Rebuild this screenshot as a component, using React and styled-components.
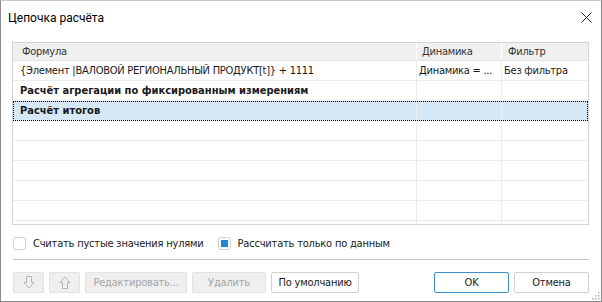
import React from "react";
import styled, { createGlobalStyle, css } from "styled-components";

const UI_FONT = `"DejaVu Sans Condensed", "DejaVu Sans", Tahoma, sans-serif`;

const Global = createGlobalStyle`
  html, body { margin: 0; padding: 0; background: #ffffff; }
  body { font-family: ${UI_FONT}; }
  * { box-sizing: border-box; }
`;

const Window = styled.div`
  width: 602px;
  height: 302px;
  background: #ffffff;
  border: 1px solid #8a8a8a;
  border-top-color: #c8c8c8;
  display: flex;
  flex-direction: column;
  position: relative;
  overflow: hidden;
  font-family: ${UI_FONT};
  font-size: 11px;
  letter-spacing: -0.2px;
  color: #1a1a1a;
`;

const TitleBar = styled.div`
  height: 32px;
  display: flex;
  align-items: center;
  justify-content: space-between;
  padding: 0 9px 0 7px;
  flex: none;
`;

const Title = styled.div`
  font-family: Roboto, "Noto Sans", sans-serif;
  font-size: 12px;
  letter-spacing: 0;
  color: #000;
  padding-top: 1px;
`;

const CloseBtn = styled.div`
  width: 12px;
  height: 12px;
  display: flex;
  align-items: center;
  justify-content: center;
`;

const Body = styled.div`
  flex: 1;
  display: flex;
  flex-direction: column;
  padding: 9px 12px 0 11px;
`;

const Grid = styled.div`
  height: 183px;
  border: 1px solid #d4d4d4;
  overflow: hidden;
  flex: none;
`;

const Row = styled.div`
  display: grid;
  grid-template-columns: 404px 85px 85px;
  height: ${(p) => (p.$header ? 18 : 20)}px;
  border-bottom: 1px solid ${(p) => (p.$header ? "#e4e4e4" : "#ececec")};
  background: ${(p) => (p.$header ? "#f0f0f0" : p.$selected ? "#d6e8f6" : "#ffffff")};
  ${(p) =>
    p.$selected &&
    css`
      outline: 1px dotted #000;
      outline-offset: -1px;
    `}
`;

const Cell = styled.div`
  display: flex;
  align-items: center;
  padding-left: ${(p) => p.$pad}px;
  white-space: nowrap;
  overflow: hidden;
  font-weight: ${(p) => (p.$bold ? 700 : 400)};
  letter-spacing: ${(p) => (p.$bold ? "0px" : "-0.25px")};
  color: ${(p) => (p.$header ? "#333" : "#1a1a1a")};
  border-right: 1px solid ${(p) => (p.$header ? "#ffffff" : "#ececec")};
  &:last-child { border-right: none; }
`;

const Options = styled.div`
  height: 34px;
  display: flex;
  align-items: center;
  gap: 14px;
  padding: 3px 0 0 1px;
  flex: none;
`;

const CheckLabel = styled.label`
  display: flex;
  align-items: center;
  gap: 7px;
  color: #1a1a1a;
`;

const Box = styled.span`
  width: 13px;
  height: 13px;
  border: 1px solid #cfcfcf;
  border-radius: 3px;
  background: #fff;
  display: flex;
  align-items: center;
  justify-content: center;
  &::after {
    content: "";
    display: ${(p) => (p.$checked ? "block" : "none")};
    width: 7px;
    height: 7px;
    background: #1f87d6;
  }
`;

const Separator = styled.div`
  height: 1px;
  background: #c8c8c8;
  margin: 0 0 0 1px;
  flex: none;
`;

const Buttons = styled.div`
  display: flex;
  align-items: center;
  gap: 5px;
  padding: 12px 0 0 1px;
`;

const Spacer = styled.div`
  flex: 1;
`;

const Button = styled.button`
  height: 21px;
  width: ${(p) => p.$w}px;
  font-family: ${UI_FONT};
  font-size: 11px;
  letter-spacing: -0.2px;
  border-radius: 2px;
  padding: 0;
  display: flex;
  align-items: center;
  justify-content: center;
  background: #ffffff;
  color: #1a1a1a;
  border: 1px solid #d0d0d0;
  ${(p) =>
    p.disabled &&
    css`
      background-color: #efefef;
      background-image: radial-gradient(#f7f7f7 0.6px, transparent 0.7px);
      background-size: 2px 2px;
      color: #a6a6a6;
      border-color: #e2e2e2;
    `}
  ${(p) =>
    p.$primary &&
    css`
      border-color: #3f8fd0;
    `}
`;

const Grip = styled.svg`
  position: absolute;
  right: 1px;
  bottom: 1px;
`;

const ArrowIcon = ({ up }) => (
  <svg width="12" height="13" viewBox="0 0 12 13" style={{ transform: up ? "rotate(180deg)" : "none" }}>
    <path d="M3.5 0.5 H8.5 V6.5 H11 L6 12 L1 6.5 H3.5 Z" fill="none" stroke="#b4b4b4" strokeWidth="1" />
  </svg>
);

const rows = [
  { f: "{Элемент |ВАЛОВОЙ РЕГИОНАЛЬНЫЙ ПРОДУКТ[t]} + 1111", d: "Динамика = ...", fl: "Без фильтра" },
  { f: "Расчёт агрегации по фиксированным измерениям", bold: true },
  { f: "Расчёт итогов", bold: true, selected: true },
  {}, {}, {}, {}, {}, {},
];

export default function App() {
  return (
    <>
      <Global />
      <Window>
        <TitleBar>
          <Title>Цепочка расчёта</Title>
          <CloseBtn>
            <svg width="11" height="11" viewBox="0 0 11 11">
              <path d="M0.5 0.5 L10.5 10.5 M10.5 0.5 L0.5 10.5" stroke="#222" strokeWidth="1" />
            </svg>
          </CloseBtn>
        </TitleBar>
        <Body>
          <Grid>
            <Row $header>
              <Cell $header $pad={9}>Формула</Cell>
              <Cell $header $pad={5}>Динамика</Cell>
              <Cell $header $pad={6}>Фильтр</Cell>
            </Row>
            {rows.map((r, i) => (
              <Row key={i} $selected={r.selected}>
                <Cell $pad={7} $bold={r.bold}>{r.f || ""}</Cell>
                <Cell $pad={2}>{r.d || ""}</Cell>
                <Cell $pad={2}>{r.fl || ""}</Cell>
              </Row>
            ))}
          </Grid>
          <Options>
            <CheckLabel>
              <Box />
              Считать пустые значения нулями
            </CheckLabel>
            <CheckLabel>
              <Box $checked />
              Рассчитать только по данным
            </CheckLabel>
          </Options>
          <Separator />
          <Buttons>
            <Button disabled $w={31}><ArrowIcon /></Button>
            <Button disabled $w={31}><ArrowIcon up /></Button>
            <Button disabled $w={102}>Редактировать...</Button>
            <Button disabled $w={74}>Удалить</Button>
            <Button $w={88}>По умолчанию</Button>
            <Spacer />
            <Button $primary $w={75}>OK</Button>
            <Button $w={75}>Отмена</Button>
          </Buttons>
        </Body>
        <Grip width="10" height="10" viewBox="0 0 10 10">
          {[[8, 2], [8, 5], [5, 5], [8, 8], [5, 8], [2, 8]].map(([x, y], i) => (
            <rect key={i} x={x} y={y} width="1.5" height="1.5" fill="#b0b0b0" />
          ))}
        </Grip>
      </Window>
    </>
  );
}
